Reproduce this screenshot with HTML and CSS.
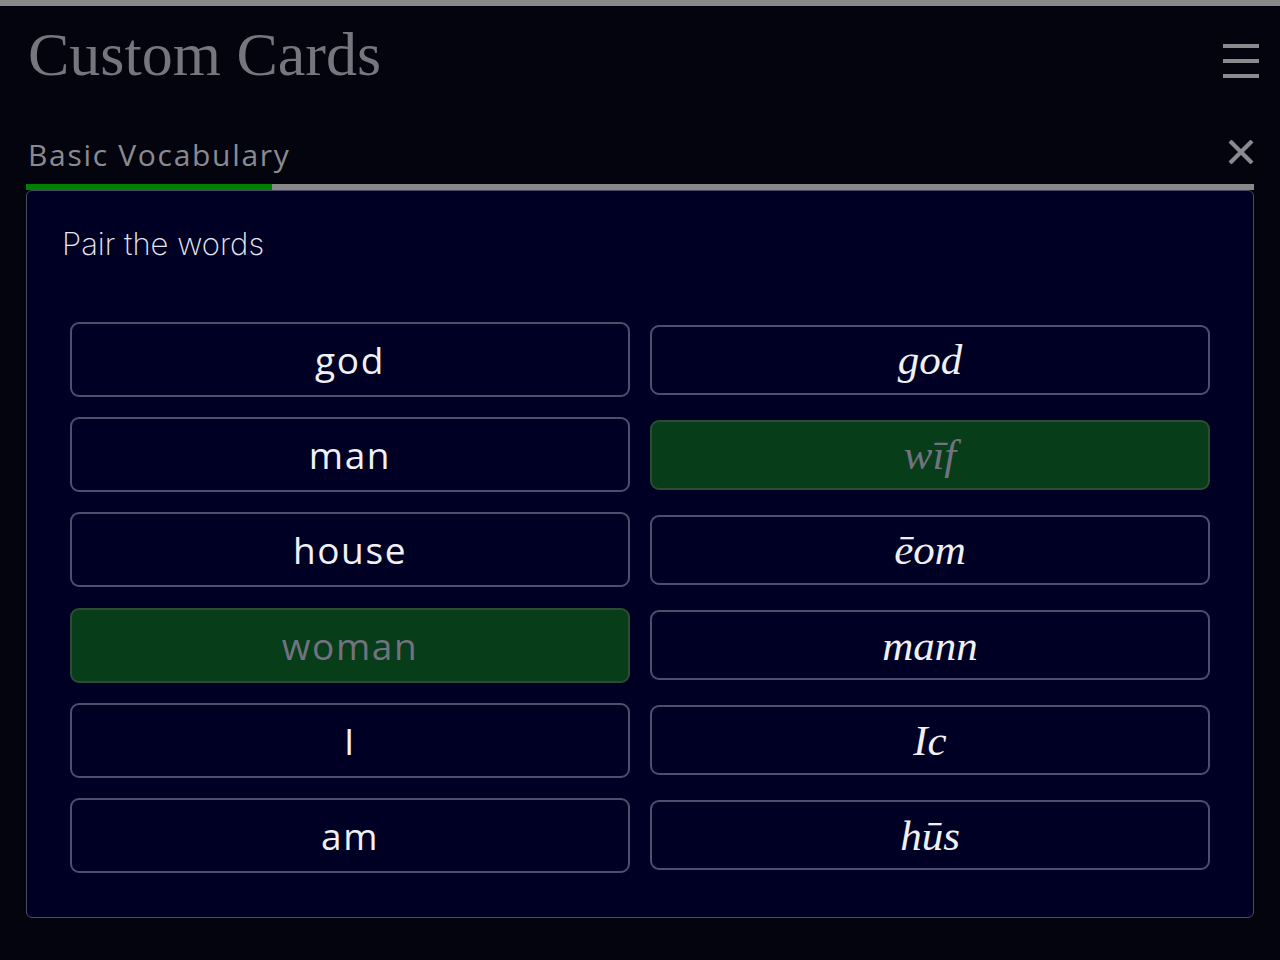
FILE: index.html
```html
<!DOCTYPE html>
<html lang="en">
<head>
<meta charset="utf-8">
<title>Custom Cards</title>
<link rel="stylesheet" href="styles.css">
</head>
<body>
<div class="topbar"></div>
<div class="page">
  <header class="header">
    <h1 class="title">Custom Cards</h1>
    <button class="menu" aria-label="Menu">
      <svg width="36" height="34" viewBox="0 0 36 34"><rect x="0" y="0" width="36" height="4" fill="#8a8a8f"/><rect x="0" y="15" width="36" height="4" fill="#8a8a8f"/><rect x="0" y="30" width="36" height="4" fill="#8a8a8f"/></svg>
    </button>
  </header>
  <div class="lesson-head">
    <span class="lesson-name">Basic Vocabulary</span>
    <button class="close" aria-label="Close">
      <svg width="26" height="24" viewBox="0 0 26 24"><path d="M2 1 L24 23 M24 1 L2 23" stroke="#8a8a8f" stroke-width="4.2" fill="none"/></svg>
    </button>
  </div>
  <div class="progress"><div class="progress-fill" style="width:20%"></div></div>
  <section class="panel">
    <p class="prompt">Pair the words</p>
    <div class="pairs">
      <button class="card left">god</button>
      <button class="card right">god</button>
      <button class="card left">man</button>
      <button class="card right selected">wīf</button>
      <button class="card left">house</button>
      <button class="card right">ēom</button>
      <button class="card left selected">woman</button>
      <button class="card right">mann</button>
      <button class="card left">I</button>
      <button class="card right">Ic</button>
      <button class="card left">am</button>
      <button class="card right">hūs</button>
    </div>
  </section>
</div>
</body>
</html>
```
FILE: styles.css
```css
html, body {
  margin: 0;
  padding: 0;
  background: #04040f;
}
body {
  font-family: "Open Sans", "Liberation Sans", sans-serif;
}
.topbar {
  height: 6px;
  background: #8a8a8a;
}
.page {
  padding: 0 26px;
}
.header {
  display: flex;
  justify-content: space-between;
  align-items: center;
  height: 100px;
}
.title {
  margin: 0 0 0 2px;
  font-family: "Liberation Serif", serif;
  font-weight: normal;
  font-size: 62px;
  line-height: 1;
  color: #76767f;
  position: relative;
  top: -2px;
}
.menu, .close {
  background: none;
  border: 0;
  padding: 0;
  display: flex;
}
.menu {
  margin-right: -5px;
  margin-top: 10px;
}
.lesson-head {
  display: flex;
  justify-content: space-between;
  align-items: center;
  height: 76px;
  padding: 0 0 0 2px;
}
.lesson-name {
  font-size: 30px;
  color: #8a8a90;
  letter-spacing: 1.7px;
  position: relative;
  top: 10px;
}
.close {
  position: relative;
  top: 8px;
}
.progress {
  height: 6px;
  background: #888888;
  margin-top: 2px;
}
.progress-fill {
  height: 100%;
  background: #008000;
}
.panel {
  background: #000024;
  border: 1px solid #4a4a66;
  border-radius: 6px;
  padding: 33px 35px 36px;
}
.prompt {
  margin: 0;
  font-family: "Inter", "Roboto", sans-serif;
  font-weight: 200;
  font-size: 31px;
  line-height: 40px;
  color: #e8e8f0;
}
.pairs {
  display: grid;
  grid-template-columns: 1fr 1fr;
  column-gap: 20px;
  row-gap: 20.2px;
  align-items: center;
  margin: 58px 8px 8px;
}
.card {
  background: #000024;
  border: 2px solid #4f4f6c;
  border-radius: 9px;
  color: #f0f0f5;
  padding: 0;
  display: flex;
  align-items: center;
  justify-content: center;
}
.card.left {
  height: 75px;
  font-family: "Open Sans", sans-serif;
  font-size: 37px;
  letter-spacing: 1.6px;
}
.card.right {
  height: 70px;
  font-family: "Liberation Serif", serif;
  font-style: italic;
  font-size: 43px;
}
.card.selected {
  background: #073d18;
  border-color: #2c4c34;
  color: #727280;
}
```
